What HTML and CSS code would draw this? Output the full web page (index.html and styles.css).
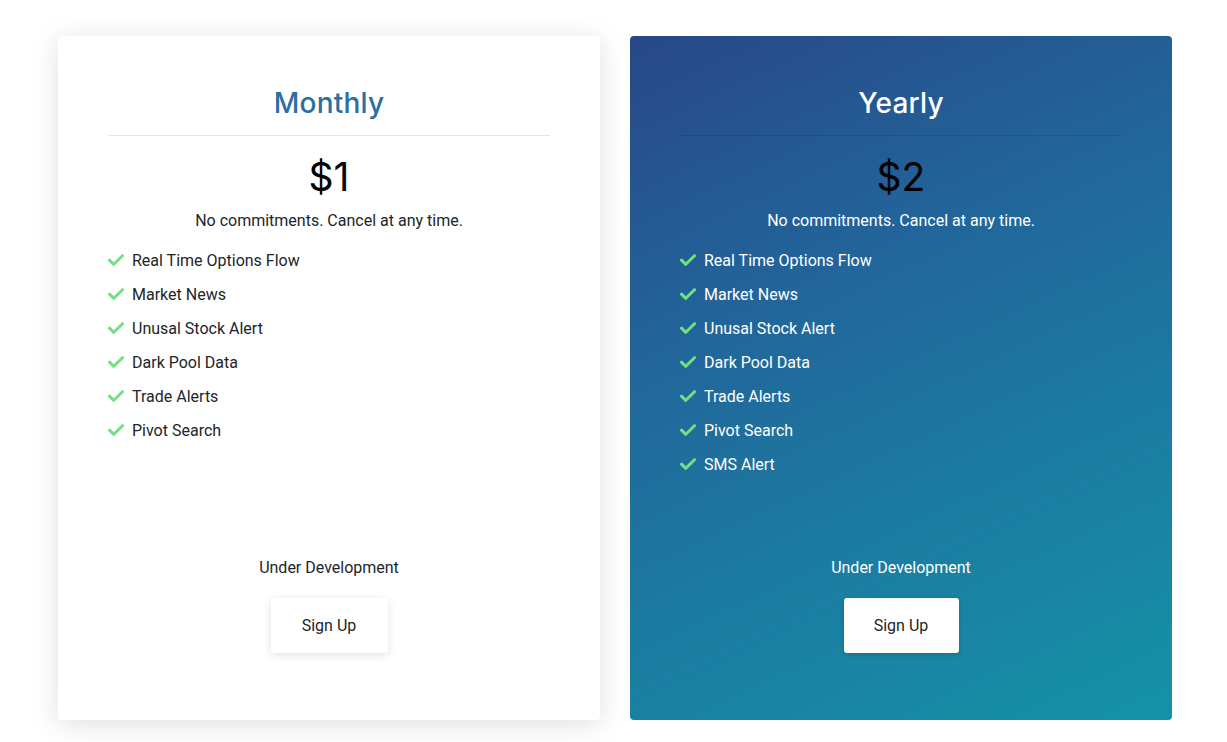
FILE: index.html
```html
<!DOCTYPE html>
<html>
<head>
<meta charset="utf-8">
<link rel="stylesheet" href="styles.css">
</head>
<body>
<main class="plans">
  <section class="card">
    <h2 class="title">Monthly</h2>
    <div class="divider"></div>
    <div class="price">$1</div>
    <p class="note">No commitments. Cancel at any time.</p>
    <ul class="features">
      <li><svg class="check" viewBox="0 0 16 12"><path d="M1.5 6.2 L5.8 10.3 L14.5 1.7" /></svg>Real Time Options Flow</li>
      <li><svg class="check" viewBox="0 0 16 12"><path d="M1.5 6.2 L5.8 10.3 L14.5 1.7" /></svg>Market News</li>
      <li><svg class="check" viewBox="0 0 16 12"><path d="M1.5 6.2 L5.8 10.3 L14.5 1.7" /></svg>Unusal Stock Alert</li>
      <li><svg class="check" viewBox="0 0 16 12"><path d="M1.5 6.2 L5.8 10.3 L14.5 1.7" /></svg>Dark Pool Data</li>
      <li><svg class="check" viewBox="0 0 16 12"><path d="M1.5 6.2 L5.8 10.3 L14.5 1.7" /></svg>Trade Alerts</li>
      <li><svg class="check" viewBox="0 0 16 12"><path d="M1.5 6.2 L5.8 10.3 L14.5 1.7" /></svg>Pivot Search</li>
    </ul>
    <div class="foot">
      <p class="status">Under Development</p>
      <button class="btn">Sign Up</button>
    </div>
  </section>
  <section class="card card-dark">
    <h2 class="title">Yearly</h2>
    <div class="divider"></div>
    <div class="price">$2</div>
    <p class="note">No commitments. Cancel at any time.</p>
    <ul class="features">
      <li><svg class="check" viewBox="0 0 16 12"><path d="M1.5 6.2 L5.8 10.3 L14.5 1.7" /></svg>Real Time Options Flow</li>
      <li><svg class="check" viewBox="0 0 16 12"><path d="M1.5 6.2 L5.8 10.3 L14.5 1.7" /></svg>Market News</li>
      <li><svg class="check" viewBox="0 0 16 12"><path d="M1.5 6.2 L5.8 10.3 L14.5 1.7" /></svg>Unusal Stock Alert</li>
      <li><svg class="check" viewBox="0 0 16 12"><path d="M1.5 6.2 L5.8 10.3 L14.5 1.7" /></svg>Dark Pool Data</li>
      <li><svg class="check" viewBox="0 0 16 12"><path d="M1.5 6.2 L5.8 10.3 L14.5 1.7" /></svg>Trade Alerts</li>
      <li><svg class="check" viewBox="0 0 16 12"><path d="M1.5 6.2 L5.8 10.3 L14.5 1.7" /></svg>Pivot Search</li>
      <li><svg class="check" viewBox="0 0 16 12"><path d="M1.5 6.2 L5.8 10.3 L14.5 1.7" /></svg>SMS Alert</li>
    </ul>
    <div class="foot">
      <p class="status">Under Development</p>
      <button class="btn btn-flat">Sign Up</button>
    </div>
  </section>
</main>
</body>
</html>
```
FILE: styles.css
```css
* { box-sizing: border-box; }
html, body { margin: 0; padding: 0; background: #fff; }
body {
  font-family: Roboto, "Liberation Sans", sans-serif;
  color: #212529;
  width: 1227px;
  height: 742px;
  overflow: hidden;
}
.plans {
  display: flex;
  gap: 30px;
  padding: 36px 0 0 58px;
}
.card {
  width: 542px;
  height: 684px;
  background: #fff;
  border-radius: 4px;
  box-shadow: 0 4px 28px rgba(0, 0, 0, 0.13);
  padding: 0 50px;
  display: flex;
  flex-direction: column;
}
.card-dark {
  background: linear-gradient(155deg, #284888 0%, #22659a 35%, #1a7fa2 70%, #1592a6 100%);
  box-shadow: none;
  color: #fff;
}
.title {
  margin: 0;
  padding-top: 47px;
  height: 99px;
  text-align: center;
  font-family: Inter, "Open Sans", sans-serif;
  font-weight: 500;
  font-size: 28px;
  line-height: 40px;
  color: #2b6fa3;
  letter-spacing: 0.2px;
}
.card-dark .title { color: #fff; }
.divider {
  height: 1px;
  background: #e5e5e5;
}
.card-dark .divider { background: rgba(0, 0, 0, 0.12); }
.price {
  margin-top: 16px;
  text-align: center;
  font-family: Inter, "Open Sans", sans-serif;
  font-size: 39px;
  line-height: 50px;
  font-weight: 400;
  color: #000;
}
.note {
  margin: 9px 0 0;
  text-align: center;
  font-size: 16px;
  line-height: 20px;
}
.card-dark .note { color: #fff; }
.features {
  list-style: none;
  margin: 12px 0 0;
  padding: 0;
}
.features li {
  display: flex;
  align-items: center;
  height: 34px;
  font-size: 16px;
  color: #212529;
}
.card-dark .features li { color: #fff; }
.check {
  width: 16px;
  height: 12px;
  margin-right: 8px;
  fill: none;
  stroke: #72e084;
  stroke-width: 3;
  stroke-linecap: round;
  stroke-linejoin: round;
}
.foot {
  margin-top: auto;
  padding-bottom: 67px;
  display: flex;
  flex-direction: column;
  align-items: center;
}
.status {
  margin: 0 0 20px;
  font-size: 16px;
  line-height: 20px;
}
.btn {
  width: 117px;
  height: 55px;
  border: none;
  border-radius: 3px;
  background: #fff;
  font-family: Roboto, "Liberation Sans", sans-serif;
  font-size: 16px;
  color: #212529;
  box-shadow: 0 2px 10px rgba(0, 0, 0, 0.12);
}
.btn-flat {
  width: 115px;
  box-shadow: 0 1px 4px rgba(0, 0, 0, 0.2);
}
```
